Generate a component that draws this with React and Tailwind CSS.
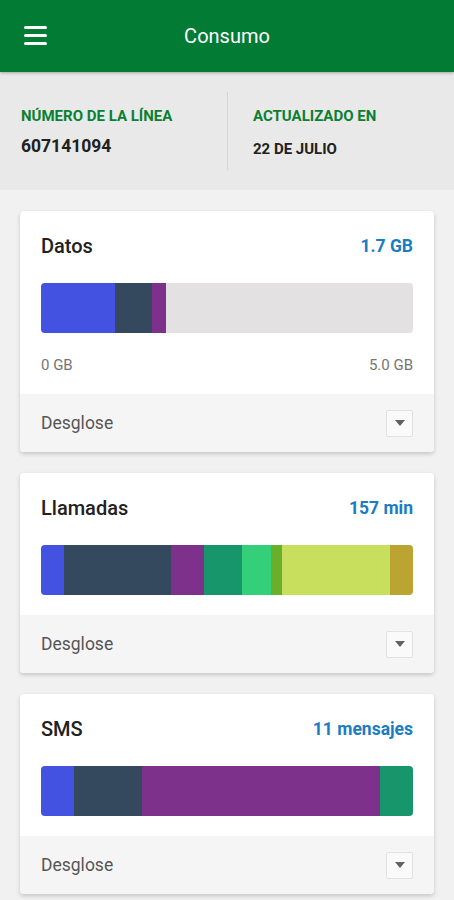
import React from 'react';

const cards = [
  {
    title: 'Datos',
    value: '1.7 GB',
    scale: ['0 GB', '5.0 GB'],
    segments: [
      ['#4352e0', 74],
      ['#34495e', 37],
      ['#7d318b', 14],
    ],
  },
  {
    title: 'Llamadas',
    value: '157 min',
    segments: [
      ['#4352e0', 23],
      ['#34495e', 107],
      ['#7d318b', 33],
      ['#16966a', 38],
      ['#33cf79', 29],
      ['#68b02a', 11],
      ['#c7df5d', 108],
      ['#bca432', 23],
    ],
  },
  {
    title: 'SMS',
    value: '11 mensajes',
    segments: [
      ['#4352e0', 33],
      ['#34495e', 68],
      ['#7d318b', 238],
      ['#16966a', 33],
    ],
  },
];

const UsageCard = ({ title, value, scale, segments }) => (
  <div className="bg-white rounded-[4px] shadow-[0_2px_4px_rgba(0,0,0,0.18)] overflow-hidden">
    <div className="px-[21px] pt-[23px] pb-5">
      <div className="flex items-center justify-between h-6">
        <span className="text-[20px] font-medium text-[#212121]">{title}</span>
        <span className="text-[17.5px] font-bold text-[#1a7cc1]">{value}</span>
      </div>
      <div className="mt-[25px] h-[50px] rounded-[4px] bg-[#e3e1e2] flex overflow-hidden">
        {segments.map(([color, w], i) => (
          <div key={i} className="h-full shrink-0" style={{ backgroundColor: color, width: w }} />
        ))}
      </div>
      {scale && (
        <div className="mt-[23px] flex justify-between text-[15px] leading-[18px] text-[#757575]">
          <span>{scale[0]}</span>
          <span>{scale[1]}</span>
        </div>
      )}
    </div>
    <div className="bg-[#f5f5f5] h-[58px] px-[21px] flex items-center justify-between">
      <span className="text-[17.5px] text-[#555555]">Desglose</span>
      <button className="w-[27px] h-[27px] bg-[#fafafa] border border-[#e2e2e2] rounded-[2px] flex items-center justify-center">
        <svg width="10" height="6" viewBox="0 0 10 6">
          <path d="M0 0h10L5 6z" fill="#616161" />
        </svg>
      </button>
    </div>
  </div>
);

export default function App() {
  return (
    <div className="min-h-[900px] bg-[#f1f1f1] font-['Roboto',sans-serif]">
      <header className="h-[72px] bg-[#027b35] relative flex items-center justify-center shadow-[0_1px_3px_rgba(0,0,0,0.3)]">
        <button className="absolute left-6 top-[26px] flex flex-col gap-[5px]">
          <span className="block w-[23px] h-[3px] bg-white rounded-sm" />
          <span className="block w-[23px] h-[3px] bg-white rounded-sm" />
          <span className="block w-[23px] h-[3px] bg-white rounded-sm" />
        </button>
        <h1 className="text-white text-[20px]">Consumo</h1>
      </header>

      <section className="bg-[#e9e9e9] py-5 flex">
        <div className="w-[227px] h-[78px] pl-[21px] pt-[15px]">
          <div className="text-[15px] font-bold text-[#0b7f32] leading-[18px]">NÚMERO DE LA LÍNEA</div>
          <div className="mt-[11px] text-[17.5px] font-bold text-[#212121] leading-5">607141094</div>
        </div>
        <div className="flex-1 h-[78px] border-l border-[#d6d6d6] pl-[25px] pt-[15px]">
          <div className="text-[15px] font-bold text-[#0b7f32] leading-[18px]">ACTUALIZADO EN</div>
          <div className="mt-[15px] text-[15px] font-bold text-[#212121] leading-[18px]">22 DE JULIO</div>
        </div>
      </section>

      <main className="px-5 pt-[21px] pb-6 flex flex-col gap-[21px]">
        {cards.map((c) => (
          <UsageCard key={c.title} {...c} />
        ))}
      </main>
    </div>
  );
}
